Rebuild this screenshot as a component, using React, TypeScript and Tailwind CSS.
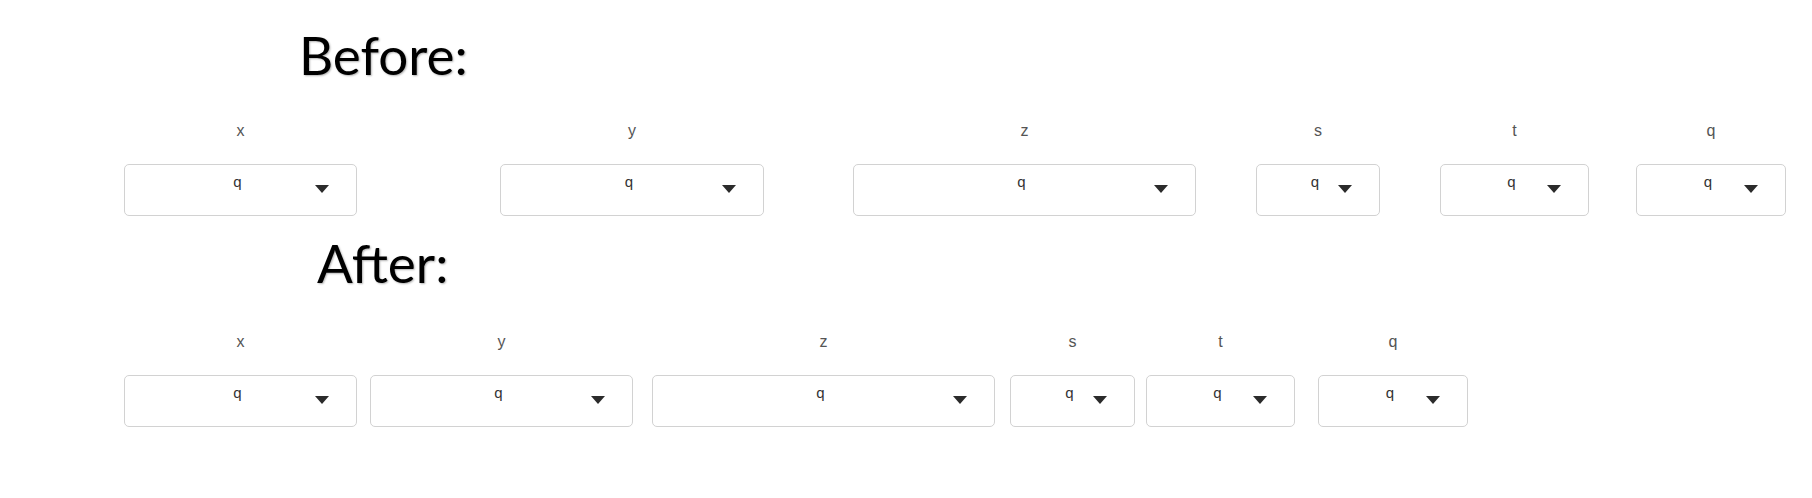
import React from 'react';

type Field = {
  label: string;
  ml: string;
  wClass: string;
};

// widths and offsets read straight from the screenshot
const before: Field[] = [
  { label: 'x', ml: 'ml-[124px]', wClass: 'w-[233px]' },
  { label: 'y', ml: 'ml-[143px]', wClass: 'w-[264px]' },
  { label: 'z', ml: 'ml-[89px]', wClass: 'w-[343px]' },
  { label: 's', ml: 'ml-[60px]', wClass: 'w-[124px]' },
  { label: 't', ml: 'ml-[60px]', wClass: 'w-[149px]' },
  { label: 'q', ml: 'ml-[47px]', wClass: 'w-[150px]' },
];

const after: Field[] = [
  { label: 'x', ml: 'ml-[124px]', wClass: 'w-[233px]' },
  { label: 'y', ml: 'ml-[13px]', wClass: 'w-[263px]' },
  { label: 'z', ml: 'ml-[19px]', wClass: 'w-[343px]' },
  { label: 's', ml: 'ml-[15px]', wClass: 'w-[125px]' },
  { label: 't', ml: 'ml-[11px]', wClass: 'w-[149px]' },
  { label: 'q', ml: 'ml-[23px]', wClass: 'w-[150px]' },
];

const SelectBox: React.FC<{ field: Field }> = ({ field }) => {
  return (
    <div className={`${field.ml} ${field.wClass} flex flex-col`}>
      <div className="h-[20px] leading-[20px] text-center text-[16px] text-[#555]">
        {field.label}
      </div>
      <div className="relative mt-[23px] h-[52px] rounded-[5px] border border-[#d2d2d2] bg-white">
        <div className="pt-[7px] pr-[6px] text-center text-[15px] leading-[20px] text-[#333]">
          q
        </div>
        <svg
          className="absolute right-[27px] top-[20px]"
          width="14"
          height="8"
          viewBox="0 0 14 8"
        >
          <polygon points="0,0 14,0 7,8" fill="#2b2b2b" />
        </svg>
      </div>
    </div>
  );
};

const Heading: React.FC<{ text: string; className: string }> = ({
  text,
  className,
}) => (
  <div
    className={`h-[64px] text-[53px] leading-[64px] text-black [font-family:Lato,sans-serif] [text-shadow:1px_1px_2px_rgba(0,0,0,0.3)] ${className}`}
  >
    {text}
  </div>
);

export default function App() {
  return (
    <div className="w-[1812px] h-[498px] bg-white pt-[23px] [font-family:'Liberation_Sans',Arial,sans-serif]">
      <Heading text="Before:" className="ml-[299px]" />
      <div className="mt-[34px] flex">
        {before.map((f) => (
          <SelectBox key={'b' + f.label} field={f} />
        ))}
      </div>

      <Heading text="After:" className="mt-[15px] ml-[317px]" />
      <div className="mt-[37px] flex">
        {after.map((f) => (
          <SelectBox key={'a' + f.label} field={f} />
        ))}
      </div>
    </div>
  );
}
